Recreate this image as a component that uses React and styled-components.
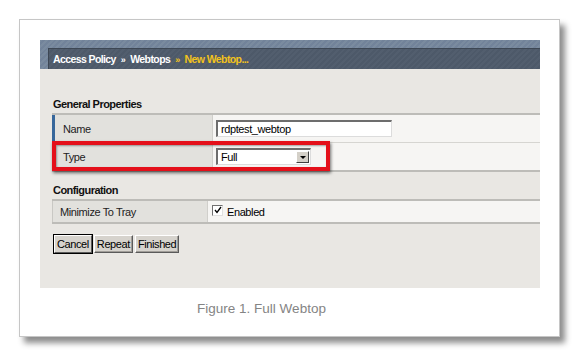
import React from 'react';
import styled, {createGlobalStyle} from 'styled-components';

const GlobalStyle = createGlobalStyle`
  html, body {
    margin: 0;
    background: #ffffff;
  }
  body {
    font-family: "Liberation Sans", Arial, sans-serif;
  }
`;

const Page = styled.div`
  padding: 19px 0 0 19px;
  width: 580px;
  height: 358px;
  box-sizing: border-box;
`;

const Card = styled.div`
  width: 541px;
  height: 318px;
  box-sizing: border-box;
  border: 1px solid #c6c6c6;
  background: #fff;
  padding: 20px 19px 0 20px;
  box-shadow: 5px 6px 6px rgba(0, 0, 0, 0.45);
  display: flex;
  flex-direction: column;
`;

const Shot = styled.div`
  width: 500px;
  height: 248px;
  background: #e9e7e3;
  overflow: hidden;
  display: flex;
  flex-direction: column;
  letter-spacing: -0.4px;
`;

const Band = styled.div`
  height: 29px;
  box-sizing: border-box;
  padding: 8px 0 0 8px;
  background: repeating-linear-gradient(135deg, #7a8b9f 0 2px, #72839a 2px 4px);
`;

const Crumbs = styled.div`
  height: 21px;
  box-sizing: border-box;
  border-top: 1px solid #3d4754;
  border-left: 1px solid #3d4754;
  background: repeating-linear-gradient(135deg, #525e6e 0 2px, #4d5969 2px 4px);
  display: flex;
  align-items: center;
  padding-left: 4px;
  font-size: 10.5px;
  font-weight: bold;
  letter-spacing: -0.6px;
  color: #fff;
  white-space: nowrap;
`;

const Crumb = styled.span`
  color: ${p => (p.$current ? '#f2c31c' : '#ffffff')};
`;

const Sep = styled.span`
  color: ${p => (p.$current ? '#f2c31c' : '#ffffff')};
  font-size: 9px;
  margin: 2px 5px 0;
`;

const Body = styled.div`
  padding: 29px 0 0 12px;
  display: flex;
  flex-direction: column;
`;

const Heading = styled.div`
  font-size: 11px;
  font-weight: bold;
  letter-spacing: -0.55px;
  color: #111;
  line-height: 13px;
  padding-left: 1px;
  margin-bottom: 2px;
`;

const Table = styled.div`
  border-top: 2px solid #bdbcb8;
  border-bottom: 2px solid #bdbcb8;
  margin-bottom: ${p => p.$gap}px;
`;

const Row = styled.div`
  position: relative;
  display: grid;
  grid-template-columns: ${p => p.$label}px 1fr;
  height: ${p => p.$h}px;
  border-top: ${p => (p.$first ? 'none' : '1px solid #d6d5d1')};
  border-left: ${p => (p.$accent ? '3px solid #37679b' : '1px solid #c9c8c4')};
`;

const Label = styled.div`
  background: #e2e1dd;
  border-right: 1px solid #d0cfcb;
  display: flex;
  align-items: center;
  padding-left: ${p => p.$pad}px;
  font-size: 11px;
  color: #222;
`;

const Value = styled.div`
  background: #f6f5f3;
  display: flex;
  align-items: center;
  padding-left: 3px;
  font-size: 11px;
  color: #000;
`;

const TextInput = styled.div`
  width: 176px;
  height: 17px;
  box-sizing: border-box;
  background: #fff;
  border-top: 2px solid #6d6d6d;
  border-left: 2px solid #6d6d6d;
  border-right: 1px solid #dcdcdc;
  border-bottom: 1px solid #dcdcdc;
  font-size: 11px;
  line-height: 14px;
  padding-left: 3px;
`;

const Select = styled(TextInput)`
  width: 95px;
  display: flex;
  align-items: center;
  justify-content: space-between;
  padding-right: 1px;
`;

const Arrow = styled.span`
  width: 13px;
  height: 12px;
  box-sizing: border-box;
  background: #d4d0c8;
  border: 1px solid;
  border-color: #fff #404040 #404040 #fff;
  display: flex;
  align-items: center;
  justify-content: center;
  &::after {
    content: '';
    border-left: 3px solid transparent;
    border-right: 3px solid transparent;
    border-top: 3px solid #000;
  }
`;

const Highlight = styled.div`
  position: absolute;
  left: -3px;
  top: -2px;
  width: 278px;
  height: 30px;
  box-sizing: border-box;
  border: 4px solid #e4101a;
  box-shadow: 1px 2px 3px rgba(0, 0, 0, 0.55), inset 1px 1px 2px rgba(0, 0, 0, 0.35);
`;

const Check = styled.span`
  width: 11px;
  height: 11px;
  box-sizing: border-box;
  background: #fff;
  border-top: 1px solid #707070;
  border-left: 1px solid #707070;
  border-right: 1px solid #e0e0e0;
  border-bottom: 1px solid #e0e0e0;
  margin: -3px 4px 0 1px;
  display: inline-flex;
  align-items: center;
  justify-content: center;
`;

const Buttons = styled.div`
  display: flex;
  gap: 2px;
  padding-left: 1px;
`;

const Button = styled.button`
  height: 18px;
  padding: 0 2px;
  font-family: "Liberation Sans", Arial, sans-serif;
  font-size: 11px;
  letter-spacing: -0.4px;
  color: #000;
  background: #d6d3cd;
  border: 1px solid;
  border-color: #ffffff #5a5a5a #5a5a5a #ffffff;
  box-shadow: ${p => (p.$focus ? '0 0 0 1px #000' : 'inset -1px -1px 0 #a09d98')};
  margin-left: ${p => (p.$focus ? '1px' : '0')};
`;

const Caption = styled.div`
  text-align: center;
  font-family: "Liberation Sans", Arial, sans-serif;
  font-size: 13.5px;
  color: #848484;
  margin-top: 13px;
  padding-right: 57px;
`;

export default function App() {
  return (
    <>
      <GlobalStyle/>
      <Page>
        <Card>
          <Shot>
            <Band>
              <Crumbs>
                <Crumb>Access Policy</Crumb>
                <Sep>»</Sep>
                <Crumb>Webtops</Crumb>
                <Sep $current>»</Sep>
                <Crumb $current>New Webtop...</Crumb>
              </Crumbs>
            </Band>
            <Body>
              <Heading>General Properties</Heading>
              <Table $gap={12}>
                <Row $label={158} $h={27} $accent $first>
                  <Label $pad={8}>Name</Label>
                  <Value><TextInput>rdptest_webtop</TextInput></Value>
                </Row>
                <Row $label={158} $h={27} $accent>
                  <Label $pad={8}>Type</Label>
                  <Value>
                    <Select>Full<Arrow/></Select>
                  </Value>
                  <Highlight/>
                </Row>
              </Table>
              <Heading>Configuration</Heading>
              <Table $gap={11}>
                <Row $label={155} $h={21} $first>
                  <Label $pad={7}>Minimize To Tray</Label>
                  <Value>
                    <Check>
                      <svg width="8" height="8" viewBox="0 0 8 8">
                        <path d="M1 4 L3 6.5 L7 1" fill="none" stroke="#000" strokeWidth="1.3"/>
                      </svg>
                    </Check>
                    Enabled
                  </Value>
                </Row>
              </Table>
              <Buttons>
                <Button $focus>Cancel</Button>
                <Button>Repeat</Button>
                <Button>Finished</Button>
              </Buttons>
            </Body>
          </Shot>
          <Caption>Figure 1. Full Webtop</Caption>
        </Card>
      </Page>
    </>
  );
}
